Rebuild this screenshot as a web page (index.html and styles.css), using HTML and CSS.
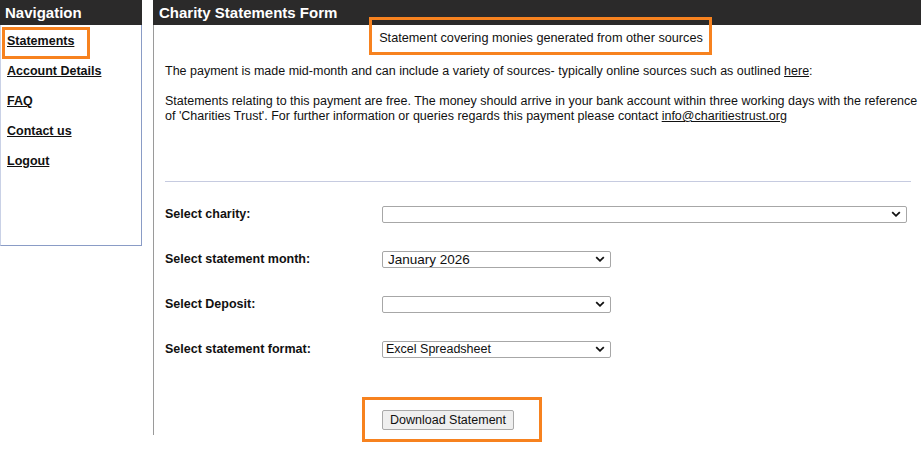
FILE: index.html
```html
<!DOCTYPE html>
<html lang="en">
<head>
<meta charset="utf-8">
<title>Charity Statements Form</title>
<link rel="stylesheet" href="styles.css">
</head>
<body>
<div class="page">
  <aside class="sidebar">
    <div class="side-head">Navigation</div>
    <ul class="nav">
      <li><a href="#">Statements</a></li>
      <li><a href="#">Account Details</a></li>
      <li><a href="#">FAQ</a></li>
      <li><a href="#">Contact us</a></li>
      <li><a href="#">Logout</a></li>
    </ul>
  </aside>
  <main class="main">
    <div class="main-head">Charity Statements Form</div>
    <div class="main-body">
      <p class="subtitle">Statement covering monies generated from other sources</p>
      <p class="para">The payment is made mid-month and can include a variety of sources- typically online sources such as outlined <a href="#">here</a>:</p>
      <p class="para">Statements relating to this payment are free. The money should arrive in your bank account within three working days with the reference of 'Charities Trust'. For further information or queries regards this payment please contact <a href="#">info@charitiestrust.org</a></p>
      <hr class="rule">
      <form class="form">
        <label class="label">Select charity:</label>
        <div class="select wide"><span class="value"></span><svg class="chev" viewBox="0 0 10 6" width="10" height="6"><path d="M1.2 1.2 L5 4.8 L8.8 1.2" fill="none" stroke="#111" stroke-width="1.8"/></svg></div>
        <label class="label">Select statement month:</label>
        <div class="select"><span class="value big">January 2026</span><svg class="chev" viewBox="0 0 10 6" width="10" height="6"><path d="M1.2 1.2 L5 4.8 L8.8 1.2" fill="none" stroke="#111" stroke-width="1.8"/></svg></div>
        <label class="label">Select Deposit:</label>
        <div class="select"><span class="value"></span><svg class="chev" viewBox="0 0 10 6" width="10" height="6"><path d="M1.2 1.2 L5 4.8 L8.8 1.2" fill="none" stroke="#111" stroke-width="1.8"/></svg></div>
        <label class="label">Select statement format:</label>
        <div class="select"><span class="value">Excel Spreadsheet</span><svg class="chev" viewBox="0 0 10 6" width="10" height="6"><path d="M1.2 1.2 L5 4.8 L8.8 1.2" fill="none" stroke="#111" stroke-width="1.8"/></svg></div>
        <span class="spacer"></span>
        <div class="btn-cell"><button type="button" class="btn">Download Statement</button></div>
      </form>
    </div>
  </main>
  <div class="mark mark-nav"></div>
  <div class="mark mark-title"></div>
  <div class="mark mark-btn"></div>
</div>
</body>
</html>
```

FILE: styles.css
```css
html, body {
  margin: 0;
  padding: 0;
  background: #fff;
}
body {
  font-family: "Liberation Sans", Arial, sans-serif;
  font-size: 12.5px;
  color: #111;
}
.page {
  position: relative;
  display: flex;
  align-items: flex-start;
  gap: 11px;
  width: 921px;
  height: 452px;
  overflow: hidden;
}
.sidebar {
  width: 142px;
  flex: none;
}
.side-head {
  height: 25px;
  line-height: 25px;
  background: #2b2a2a;
  color: #fff;
  font-weight: bold;
  font-size: 15px;
  padding-left: 5px;
}
.nav {
  list-style: none;
  margin: 0;
  padding: 1px 0 0 6px;
  height: 219px;
  border-left: 1px solid #c9d1e6;
  border-right: 1px solid #8a9cc6;
  border-bottom: 1px solid #8a9cc6;
  box-sizing: content-box;
}
.nav li {
  line-height: 30px;
  height: 30px;
}
.nav a {
  color: #111;
  font-weight: bold;
  text-decoration: underline;
}
.main {
  flex: 1;
  min-width: 0;
}
.main-head {
  height: 25px;
  line-height: 25px;
  background: #2b2a2a;
  color: #fff;
  font-weight: bold;
  font-size: 15px;
  padding-left: 6px;
}
.main-body {
  border-left: 1px solid #9a9a9a;
  height: 410px;
  padding: 6px 0 0 11px;
  box-sizing: border-box;
}
.main-body p {
  margin: 0;
  line-height: 15px;
}
.subtitle {
  text-align: center;
  font-size: 12.7px;
  padding-right: 4px;
}
.para {
  margin-top: 18px !important;
}
.para + .para {
  margin-top: 15px !important;
}
.para a {
  color: #111;
}
.rule {
  border: 0;
  border-top: 1px solid #c6cbe0;
  margin: 57px 10px 0 0;
  height: 0;
}
.form {
  display: grid;
  grid-template-columns: 217px auto;
  justify-content: start;
  align-items: center;
  row-gap: 28px;
  margin-top: 24px;
}
.label {
  font-weight: bold;
  line-height: 17px;
}
.select {
  position: relative;
  box-sizing: border-box;
  width: 229px;
  height: 17px;
  border: 1px solid #a7a7a7;
  border-radius: 2px;
  background: #fff;
  line-height: 15px;
  padding-left: 3px;
}
.select.wide {
  width: 525px;
}
.value {
  font-size: 12.5px;
}
.value.big {
  font-size: 13.5px;
  padding-left: 2px;
}
.chev {
  position: absolute;
  right: 5px;
  top: 4px;
}
.spacer {
  display: block;
}
.btn-cell {
  margin-top: 24px;
}
.btn {
  font-family: "Liberation Sans", Arial, sans-serif;
  font-size: 12.5px;
  color: #111;
  background: #efefef;
  border: 1px solid #a9a9a9;
  border-radius: 2px;
  height: 20px;
  padding: 0 7px;
  line-height: 18px;
}
.mark {
  position: absolute;
  border: 3px solid #f7821f;
  box-sizing: border-box;
  pointer-events: none;
}
.mark-nav {
  left: 2px;
  top: 27px;
  width: 88px;
  height: 32px;
}
.mark-title {
  left: 369px;
  top: 17px;
  width: 343px;
  height: 38px;
}
.mark-btn {
  left: 362px;
  top: 397px;
  width: 180px;
  height: 45px;
}
```
